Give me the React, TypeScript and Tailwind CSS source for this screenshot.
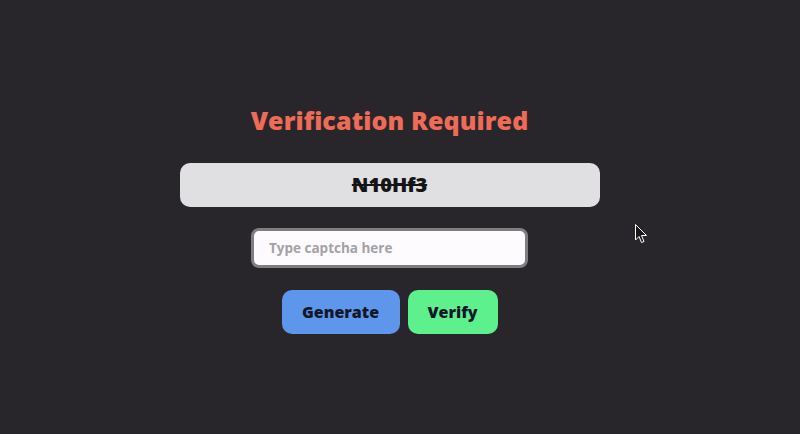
export default function App() {
  return (
    <div
      className="relative min-h-screen bg-[#28262b] flex flex-col items-center pt-[104px] pr-[21px]"
      style={{ fontFamily: '"Open Sans", "Liberation Sans", sans-serif' }}
    >
      <h1 className="text-[25px] leading-[32px] font-extrabold text-[#ee6c57] tracking-[0.1px]">
        Verification Required
      </h1>

      {/* captcha display */}
      <div className="mt-[27px] w-[420px] h-[44px] rounded-[10px] bg-[#e0dfe2] flex items-center justify-center">
        <span className="text-[20px] font-extrabold text-[#151515] line-through decoration-2 select-none">
          N10Hf3
        </span>
      </div>

      <input
        type="text"
        placeholder="Type captcha here"
        className="mt-[21px] w-[277px] h-[40px] rounded-[8px] border-[3px] border-[#7f7e80] bg-[#fdfbfe] px-[15px] text-[13.5px] font-bold text-[#222] placeholder:text-[#a3a2a5] outline-none"
      />

      <div className="mt-[22px] flex gap-[8px]">
        <button className="w-[118px] h-[44px] rounded-[10px] bg-[#5e96ec] text-[16px] font-extrabold text-[#10182a]">
          Generate
        </button>
        <button className="w-[90px] h-[44px] rounded-[10px] bg-[#5ef08c] text-[16px] font-extrabold text-[#10182a]">
          Verify
        </button>
      </div>

      {/* mouse pointer */}
      <svg
        className="absolute left-[635px] top-[224px]"
        width="13"
        height="20"
        viewBox="0 0 13 20"
      >
        <path
          d="M0.5 0.5 L0.5 16 L4 12.5 L6.5 18.5 L9 17.5 L6.5 11.5 L11.5 11.5 Z"
          fill="#1a1a1a"
          stroke="#ffffff"
          strokeWidth="1"
          strokeLinejoin="miter"
        />
      </svg>
    </div>
  );
}
